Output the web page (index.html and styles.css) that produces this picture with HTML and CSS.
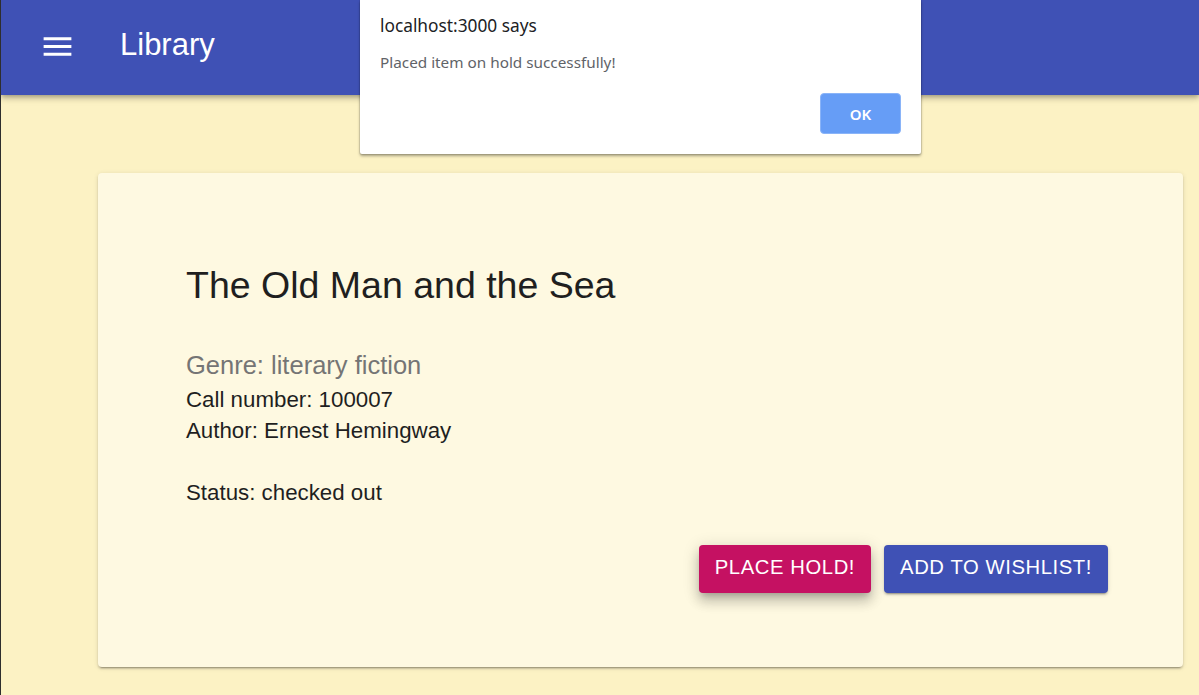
FILE: index.html
```html
<!DOCTYPE html>
<html lang="en">
<head>
<meta charset="utf-8">
<title>Library</title>
<link rel="stylesheet" href="styles.css">
</head>
<body>
<div class="page">
  <header class="appbar">
    <svg class="menu-icon" viewBox="0 0 24 24" aria-hidden="true"><path d="M3 18h18v-2H3v2zm0-5h18v-2H3v2zm0-7v2h18V6H3z"/></svg>
    <span class="brand">Library</span>
  </header>
  <main class="content">
    <section class="card">
      <h1 class="title">The Old Man and the Sea</h1>
      <p class="genre">Genre: literary fiction</p>
      <p class="line">Call number: 100007</p>
      <p class="line">Author: Ernest Hemingway</p>
      <p class="line status">Status: checked out</p>
      <div class="actions">
        <button class="btn btn-hold">Place hold!</button>
        <button class="btn btn-wish">Add to wishlist!</button>
      </div>
    </section>
  </main>
  <div class="dialog">
    <div class="dialog-title">localhost:3000 says</div>
    <div class="dialog-msg">Placed item on hold successfully!</div>
    <div class="dialog-actions">
      <button class="dialog-ok">OK</button>
    </div>
  </div>
</div>
</body>
</html>
```

FILE: styles.css
```css
* { box-sizing: border-box; }
html, body { margin: 0; padding: 0; }
body {
  font-family: "Liberation Sans", Arial, sans-serif;
  background: #fcf2c4;
}
.page {
  position: relative;
  height: 695px;
  border-left: 1px solid #2e2e2e;
  background: #fcf2c4;
  overflow: hidden;
}
.appbar {
  height: 95px;
  background: #3f51b5;
  display: flex;
  align-items: center;
  padding-left: 38px;
  box-shadow: 0 2px 4px -1px rgba(0,0,0,.2), 0 4px 5px 0 rgba(0,0,0,.14), 0 1px 10px 0 rgba(0,0,0,.12);
  position: relative;
  z-index: 1;
}
.menu-icon {
  width: 37px;
  height: 37px;
  fill: #fff;
  margin-top: -2px;
}
.brand {
  color: #fff;
  font-size: 31px;
  margin-left: 44px;
  margin-top: -5px;
}
.content {
  padding: 78px 16px 0 97px;
}
.card {
  background: #fef9e1;
  border-radius: 4px;
  padding: 90px 75px 74px 88px;
  box-shadow: 0 3px 1px -2px rgba(0,0,0,.2), 0 2px 2px 0 rgba(0,0,0,.14), 0 1px 5px 0 rgba(0,0,0,.12);
}
.title {
  margin: 0;
  font-weight: 400;
  font-size: 37.5px;
  line-height: 44px;
  color: #1f1f1f;
}
.genre {
  margin: 40px 0 0;
  font-size: 25.5px;
  line-height: 36px;
  color: #757575;
}
.line {
  margin: 1px 0 0;
  font-size: 22.3px;
  line-height: 31px;
  color: #1f1f1f;
}
.line + .line { margin-top: 0; }
.status { margin-top: 31px !important; }
.actions {
  display: flex;
  justify-content: flex-end;
  gap: 13px;
  margin-top: 37px;
}
.btn {
  height: 48px;
  padding: 0 16px 3px;
  border: none;
  border-radius: 4px;
  color: #fff;
  font-family: "Liberation Sans", Arial, sans-serif;
  font-size: 20.25px;
  letter-spacing: 0.02857em;
  text-transform: uppercase;
}
.btn-hold {
  background: #c51162;
  box-shadow: 0 5px 6px -3px rgba(0,0,0,.2), 0 9px 12px 1px rgba(0,0,0,.14), 0 3px 16px 2px rgba(0,0,0,.12);
}
.btn-wish {
  background: #3f51b5;
  box-shadow: 0 3px 1px -2px rgba(0,0,0,.2), 0 2px 2px 0 rgba(0,0,0,.14), 0 1px 5px 0 rgba(0,0,0,.12);
}
.dialog {
  position: absolute;
  left: 359px;
  top: 0;
  width: 561px;
  height: 154px;
  background: #fff;
  border-radius: 0 0 2px 2px;
  box-shadow: 0 0 0 1px rgba(0,0,0,.08), 0 2px 3px rgba(0,0,0,.35);
  z-index: 5;
  padding: 14px 20px 0 20px;
  font-family: "Noto Sans", "Open Sans", sans-serif;
}
.dialog-title {
  font-size: 17.3px;
  line-height: 24px;
  color: #202124;
}
.dialog-msg {
  margin-top: 14px;
  font-size: 15.3px;
  line-height: 20px;
  color: #5f6368;
}
.dialog-actions {
  display: flex;
  justify-content: flex-end;
  margin-top: 21px;
}
.dialog-ok {
  width: 81px;
  height: 41px;
  background: #669df6;
  border: 1px solid #8ab4f8;
  border-radius: 4px;
  color: #fff;
  font-family: "Noto Sans", "Open Sans", sans-serif;
  font-size: 15px;
  font-weight: 600;
}
```
